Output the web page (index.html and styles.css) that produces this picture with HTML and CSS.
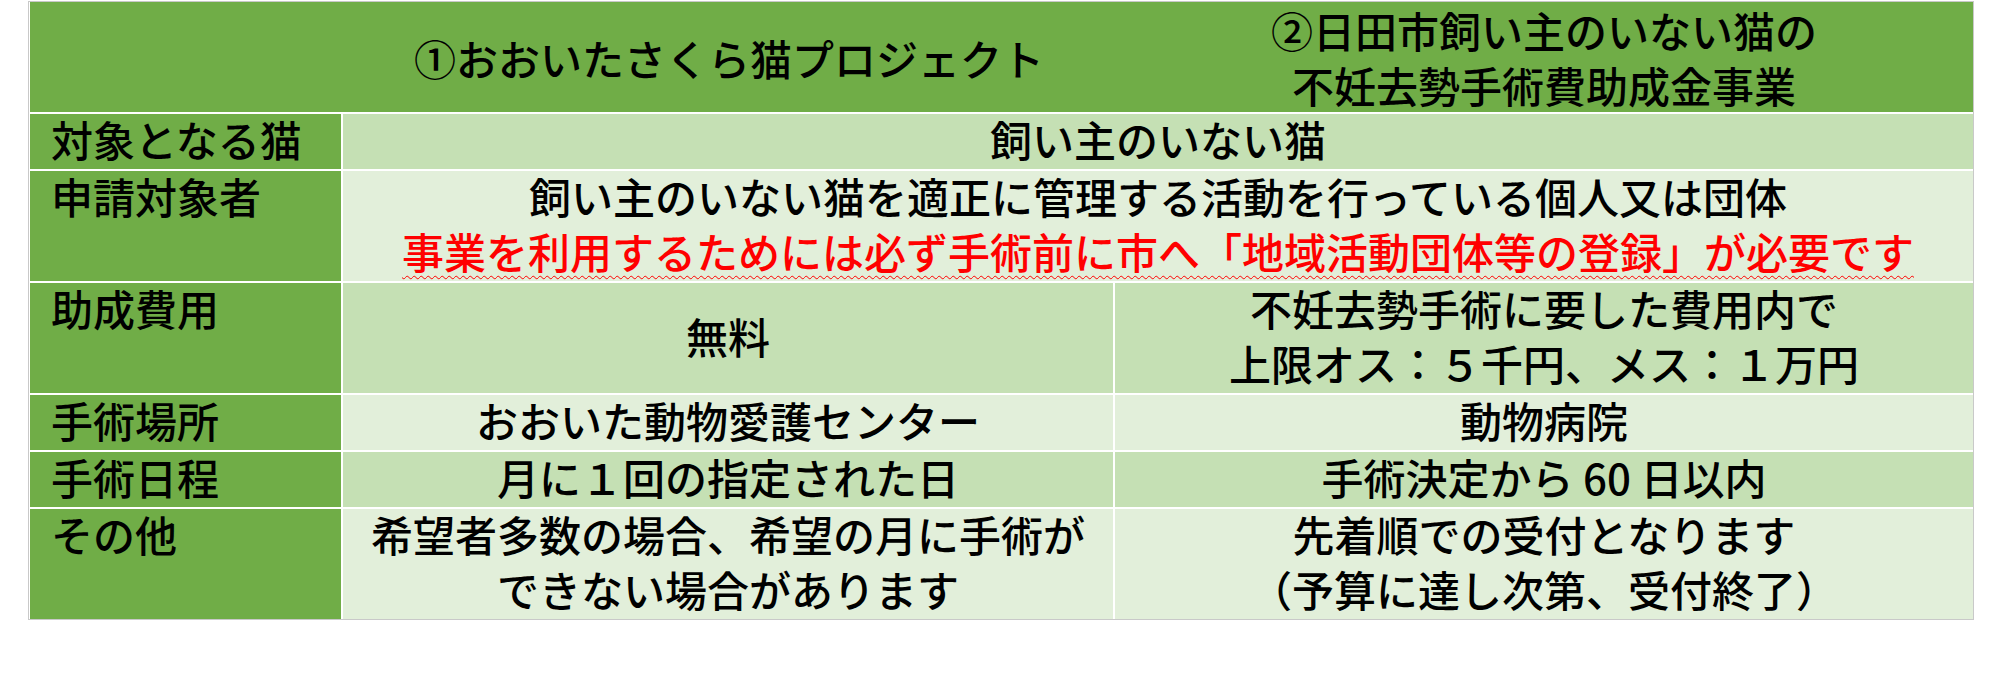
FILE: index.html
```html
<!DOCTYPE html>
<html lang="ja">
<head>
<meta charset="utf-8">
<title>さくら猫 比較表</title>
<link rel="stylesheet" href="styles.css">
</head>
<body>
<div class="table">
  <div class="head">
    <div class="head-cell"></div>
    <div class="head-cell">①おおいたさくら猫プロジェクト</div>
    <div class="head-cell">②日田市飼い主のいない猫の<br>不妊去勢手術費助成金事業</div>
  </div>

  <div class="label">対象となる猫</div>
  <div class="cell dark span2">飼い主のいない猫</div>

  <div class="label">申請対象者</div>
  <div class="cell light span2">
    <div>飼い主のいない猫を適正に管理する活動を行っている個人又は団体</div>
    <div class="warn"><span class="wavy">事業を利用するためには必ず手術前に市へ「地域活動団体等の登録」が必要です</span></div>
  </div>

  <div class="label">助成費用</div>
  <div class="cell dark">無料</div>
  <div class="cell dark">不妊去勢手術に要した費用内で<br>上限オス：５千円、メス：１万円</div>

  <div class="label">手術場所</div>
  <div class="cell light">おおいた動物愛護センター</div>
  <div class="cell light">動物病院</div>

  <div class="label">手術日程</div>
  <div class="cell dark">月に１回の指定された日</div>
  <div class="cell dark">手術決定から 60 日以内</div>

  <div class="label">その他</div>
  <div class="cell light">希望者多数の場合、希望の月に手術が<br>できない場合があります</div>
  <div class="cell light">先着順での受付となります<br>（予算に達し次第、受付終了）</div>
</div>
</body>
</html>
```

FILE: styles.css
```css
html, body {
  margin: 0;
  padding: 0;
  background: #ffffff;
}

body {
  font-family: "Noto Sans CJK JP", "Noto Sans", sans-serif;
  font-size: 42px;
  font-weight: 500;
  line-height: 55px;
  color: #000000;
}

.table {
  margin: 1px 0 0 28px;
  width: 1943px;
  border: 1px solid #c9c9c9;
  padding: 0 0 0 1px;
  background: #ffffff;
  display: grid;
  grid-template-columns: 311px 770px 1fr;
  grid-template-rows: 110px 55px 110px 110px 55px 55px 110px;
  gap: 2px;
}

.head {
  grid-column: 1 / 4;
  display: grid;
  grid-template-columns: 313px 772px 1fr;
  background: #70ad47;
}

.head-cell {
  display: flex;
  flex-direction: column;
  align-items: center;
  justify-content: center;
  text-align: center;
  padding-bottom: 6px;
}

.label {
  background: #70ad47;
  padding-left: 21px;
  line-height: 49px;
}

.cell {
  display: flex;
  flex-direction: column;
  align-items: center;
  justify-content: center;
  text-align: center;
  padding-bottom: 6px;
}

.span2 {
  grid-column: 2 / 4;
}

.dark {
  background: #c5e0b4;
}

.light {
  background: #e2efda;
}

.warn {
  color: #ff0000;
}

.wavy {
  text-decoration-line: underline;
  text-decoration-style: wavy;
  text-decoration-color: #ff0000;
  text-decoration-thickness: 1px;
  text-underline-offset: 6px;
}
```
